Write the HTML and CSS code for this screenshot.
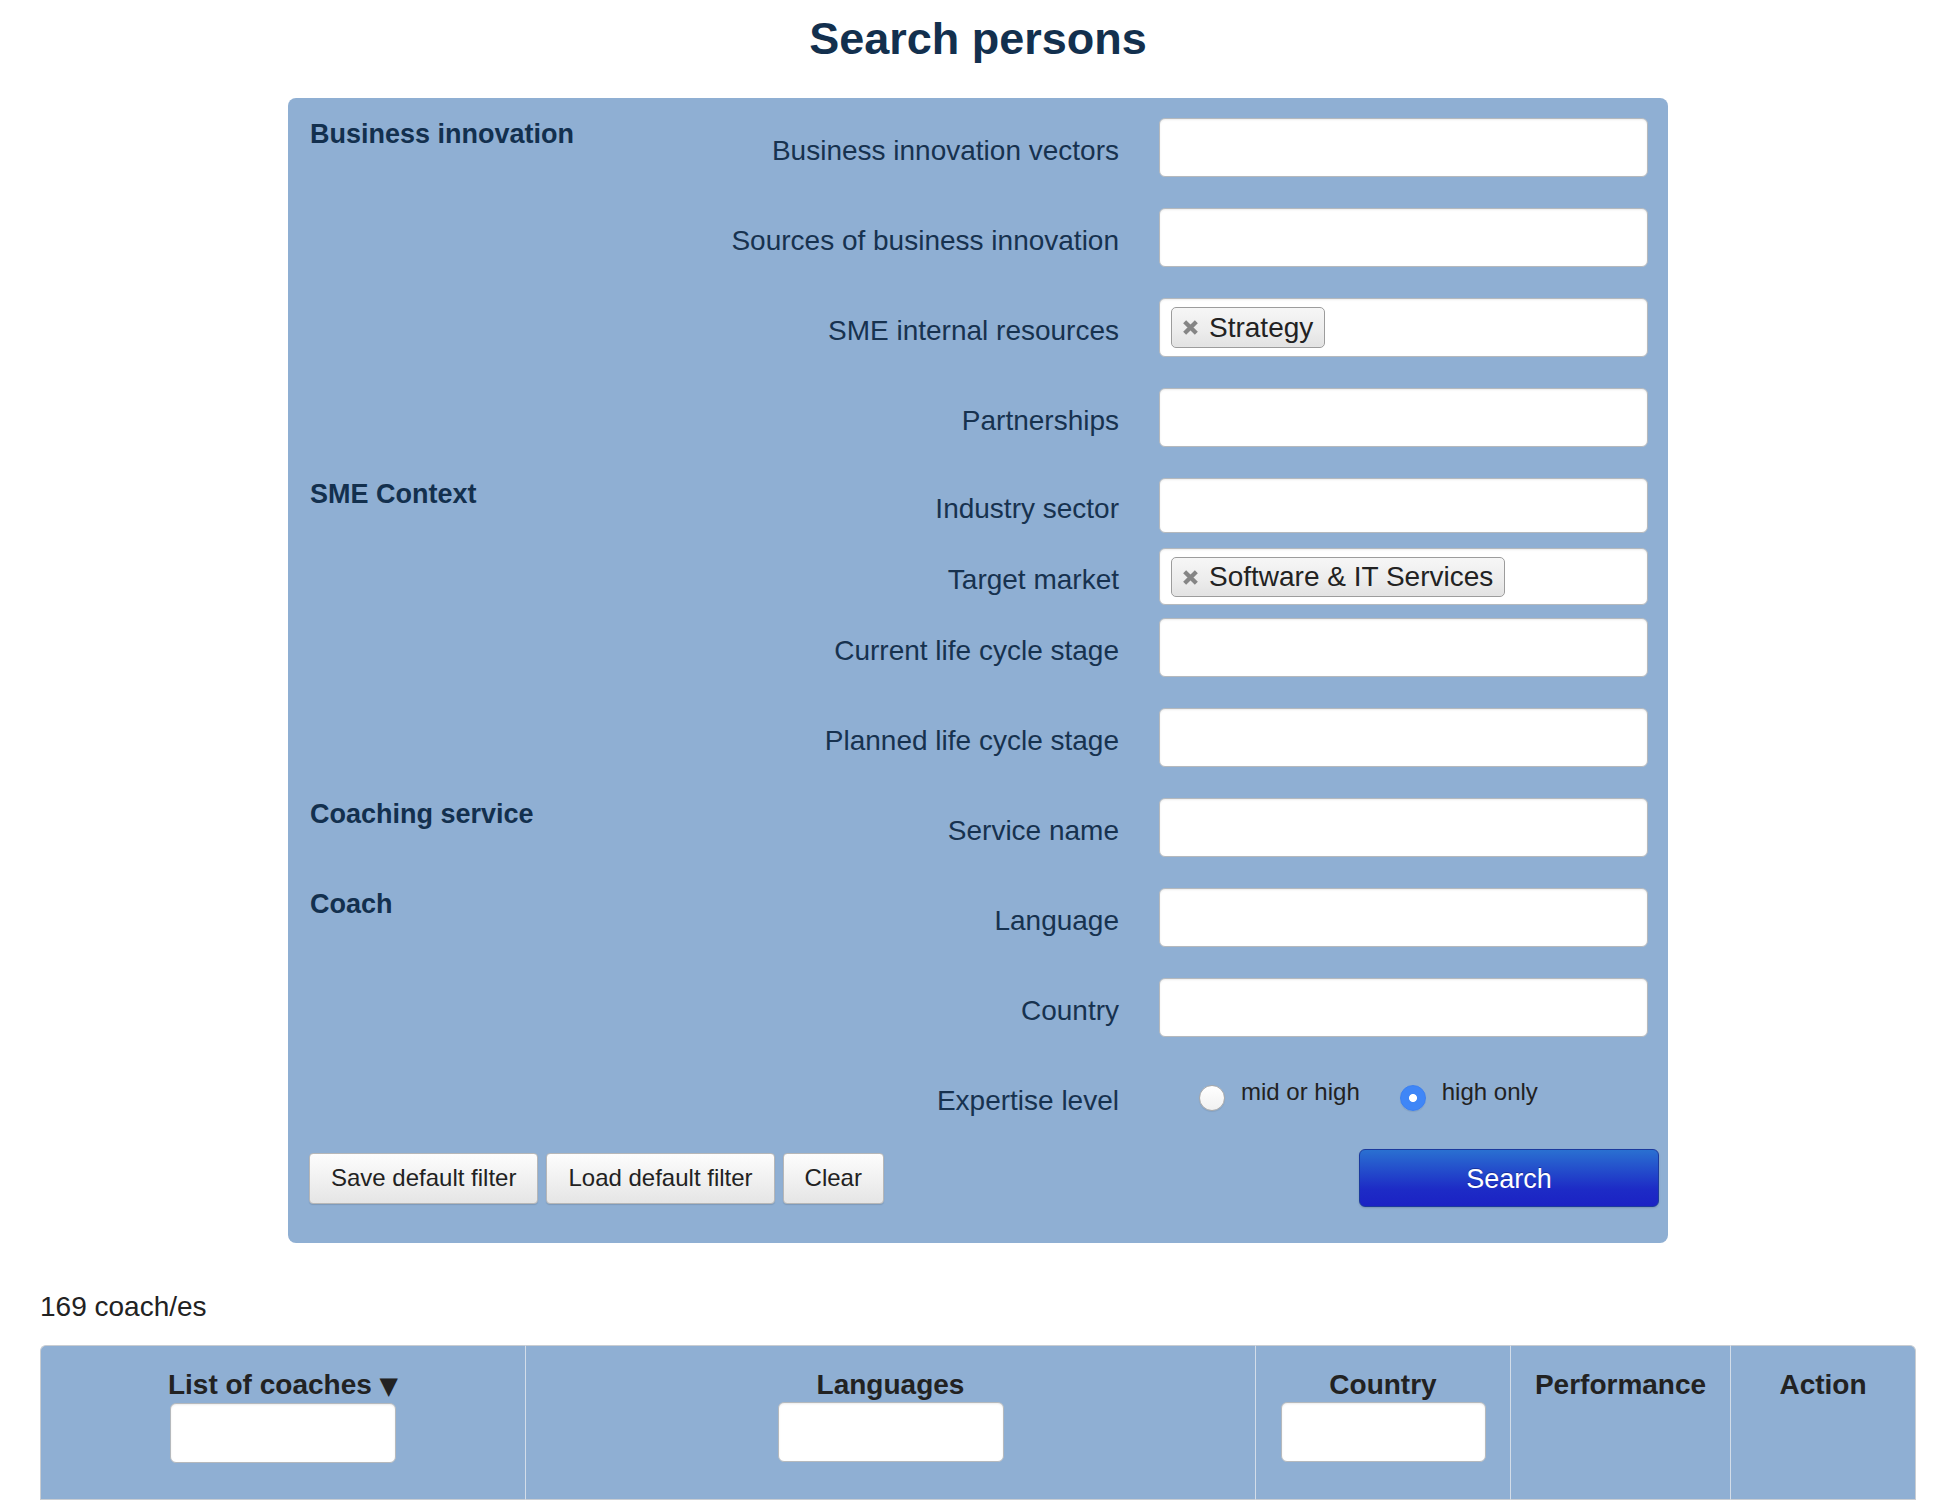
FILE: index.html
```html
<!DOCTYPE html>
<html lang="en">
<head>
<meta charset="utf-8">
<title>Search persons</title>
<link rel="stylesheet" href="styles.css">
</head>
<body>
<div class="page">
  <h1 class="title">Search persons</h1>

  <form class="panel">
    <div class="group">
      <h2 class="group-title">Business innovation</h2>
      <div class="group-rows">
        <div class="row"><label class="row-label">Business innovation vectors</label><input class="field" type="text"></div>
        <div class="row"><label class="row-label">Sources of business innovation</label><input class="field" type="text"></div>
        <div class="row"><label class="row-label">SME internal resources</label>
          <div class="field field--tags"><span class="tag"><svg class="tag-x" viewBox="0 0 16 16"><path d="M2.5 2.5 L13.5 13.5 M13.5 2.5 L2.5 13.5"/></svg>Strategy</span></div>
        </div>
        <div class="row"><label class="row-label">Partnerships</label><input class="field" type="text"></div>
      </div>
    </div>

    <div class="group">
      <h2 class="group-title">SME Context</h2>
      <div class="group-rows">
        <div class="row row--industry"><label class="row-label">Industry sector</label><input class="field" type="text"></div>
        <div class="row row--target"><label class="row-label">Target market</label>
          <div class="field field--tags"><span class="tag tag--short"><svg class="tag-x" viewBox="0 0 16 16"><path d="M2.5 2.5 L13.5 13.5 M13.5 2.5 L2.5 13.5"/></svg>Software &amp; IT Services</span></div>
        </div>
        <div class="row"><label class="row-label">Current life cycle stage</label><input class="field" type="text"></div>
        <div class="row"><label class="row-label">Planned life cycle stage</label><input class="field" type="text"></div>
      </div>
    </div>

    <div class="group">
      <h2 class="group-title">Coaching service</h2>
      <div class="group-rows">
        <div class="row"><label class="row-label">Service name</label><input class="field" type="text"></div>
      </div>
    </div>

    <div class="group">
      <h2 class="group-title">Coach</h2>
      <div class="group-rows">
        <div class="row"><label class="row-label">Language</label><input class="field" type="text"></div>
        <div class="row"><label class="row-label">Country</label><input class="field" type="text"></div>
        <div class="row row--expertise"><span class="row-label">Expertise level</span>
          <div class="radios">
            <span class="radio-option"><span class="radio"></span>mid or high</span>
            <span class="radio-option"><span class="radio radio--checked"></span>high only</span>
          </div>
        </div>
      </div>
    </div>

    <div class="actions">
      <div class="actions-left">
        <button type="button" class="btn">Save default filter</button>
        <button type="button" class="btn">Load default filter</button>
        <button type="button" class="btn">Clear</button>
      </div>
      <button type="button" class="btn-search">Search</button>
    </div>
  </form>

  <p class="count">169 coach/es</p>

  <table class="results">
    <colgroup>
      <col class="c1"><col class="c2"><col class="c3"><col class="c4"><col class="c5">
    </colgroup>
    <thead>
      <tr>
        <th><div class="th-text">List of coaches <span class="sort">▼</span></div><input class="th-input" type="text"></th>
        <th><div class="th-text">Languages</div><input class="th-input" type="text"></th>
        <th><div class="th-text">Country</div><input class="th-input th-input--narrow" type="text"></th>
        <th><div class="th-text">Performance</div></th>
        <th><div class="th-text">Action</div></th>
      </tr>
    </thead>
  </table>
</div>
</body>
</html>
```

FILE: styles.css
```css
* { box-sizing: border-box; }

html, body {
  margin: 0;
  padding: 0;
  background: #ffffff;
  font-family: "Liberation Sans", Arial, Helvetica, sans-serif;
  color: #222222;
}

.page {
  margin-left: 40px;
  width: 1876px;
}

.title {
  margin: 13px 0 33px;
  font-size: 45px;
  line-height: 52px;
  font-weight: bold;
  text-align: center;
  color: #13304e;
}

.panel {
  width: 1380px;
  margin: 0 auto;
  padding: 20px 20px 36px 22px;
  background: #8fafd3;
  border-radius: 8px;
}

.group {
  display: grid;
  grid-template-columns: 400px 1fr;
}

.group-title {
  margin: 1px 0 0;
  font-size: 27px;
  line-height: 31px;
  font-weight: bold;
  color: #13304e;
}

.row {
  display: grid;
  grid-template-columns: 1fr 489px;
  column-gap: 40px;
  align-items: center;
  margin-bottom: 31px;
}

.row-label {
  padding-top: 6px;
  text-align: right;
  font-size: 28px;
  line-height: 32px;
  color: #17324f;
}

.field {
  display: block;
  width: 489px;
  height: 59px;
  margin: 0;
  padding: 0 10px;
  background: #ffffff;
  border: 1px solid #b5b9bd;
  border-radius: 6px;
  box-shadow: inset 0 1px 2px rgba(0, 0, 0, 0.08);
  font-family: inherit;
  font-size: 28px;
}

.row--industry { margin-bottom: 15px; }
.row--industry .field { height: 55px; }
.row--target { margin-bottom: 13px; }
.row--target .field { height: 57px; }

.field--tags {
  padding: 8px 11px;
}

.tag {
  display: inline-flex;
  align-items: center;
  height: 41px;
  padding: 0 11px 0 10px;
  border: 1px solid #9c9c9c;
  border-radius: 5px;
  background: linear-gradient(#f6f6f6 0%, #ececec 60%, #e2e2e2 100%);
  box-shadow: inset 0 0 1px #ffffff;
  font-size: 28px;
  line-height: 32px;
  color: #222222;
}

.tag--short { height: 40px; }

.tag-x {
  width: 17px;
  height: 17px;
  margin-right: 10px;
  flex: none;
}

.tag-x path {
  stroke: #858585;
  stroke-width: 4;
  fill: none;
}

.row--expertise {
  margin-bottom: 22px;
  height: 59px;
}

.radios {
  display: flex;
  align-self: start;
  gap: 40px;
  padding: 10px 0 0 40px;
  height: 59px;
}

.radio-option {
  display: flex;
  align-items: flex-start;
  gap: 16px;
  font-size: 24px;
  line-height: 28px;
  color: #222222;
}

.radio {
  width: 26px;
  height: 26px;
  margin-top: 7px;
  border-radius: 50%;
  border: 1px solid #a9a9a9;
  background: linear-gradient(#ffffff, #f1f1f1);
  box-shadow: 0 1px 1px rgba(0, 0, 0, 0.08);
  flex: none;
}

.radio--checked {
  border-color: #3b7ff0;
  background: radial-gradient(circle, #ffffff 0, #ffffff 3.6px, #3f86f7 4.4px);
}

.actions {
  display: flex;
  justify-content: space-between;
  align-items: center;
  margin: 0 -11px 0 -1px;
}

.actions-left {
  display: flex;
  gap: 8px;
}

.btn {
  height: 51px;
  padding: 0 21px;
  border: 1px solid #b7b7b7;
  border-radius: 4px;
  background: linear-gradient(#fdfdfd, #e5e5e5);
  box-shadow: 0 1px 1px rgba(0, 0, 0, 0.12);
  font-family: inherit;
  font-size: 24px;
  color: #222222;
}

.btn-search {
  width: 300px;
  height: 58px;
  padding-top: 3px;
  border: 1px solid #1b3a9e;
  border-radius: 6px;
  background: linear-gradient(#2a70d1, #1d2bc6 70%, #1b22c4);
  box-shadow: 0 1px 2px rgba(0, 0, 0, 0.15);
  font-family: inherit;
  font-size: 27px;
  color: #ffffff;
  text-shadow: 0 -1px 0 rgba(0, 0, 60, 0.35);
}

.count {
  margin: 48px 0 22px;
  font-size: 28px;
  line-height: 32px;
  color: #222222;
}

.results {
  width: 1876px;
  table-layout: fixed;
  border-collapse: separate;
  border-spacing: 0;
}

.c1 { width: 485px; }
.c2 { width: 730px; }
.c3 { width: 255px; }
.c4 { width: 220px; }
.c5 { width: 186px; }

.results th {
  vertical-align: top;
  padding: 23px 0 36px;
  background: #8fafd3;
  border-top: 1px solid #c9cdd2;
  border-bottom: 2px solid #c9cdd2;
  border-left: 1px solid #d3dde9;
  font-size: 28px;
  font-weight: bold;
  color: #222222;
  text-align: center;
}

.results th:first-child {
  border-left: 1px solid #c9cdd2;
  border-top-left-radius: 6px;
}

.results th:last-child {
  border-right: 1px solid #c9cdd2;
  border-top-right-radius: 6px;
}

.th-text {
  line-height: 32px;
}

.sort {
  font-family: "DejaVu Sans", sans-serif;
  font-size: 24px;
}

.th-input {
  display: block;
  width: 226px;
  height: 60px;
  margin: 1px auto 0;
  background: #ffffff;
  border: 1px solid #b5b9bd;
  border-radius: 6px;
  box-shadow: inset 0 1px 2px rgba(0, 0, 0, 0.08);
}

.th-input--narrow { width: 205px; }
```
